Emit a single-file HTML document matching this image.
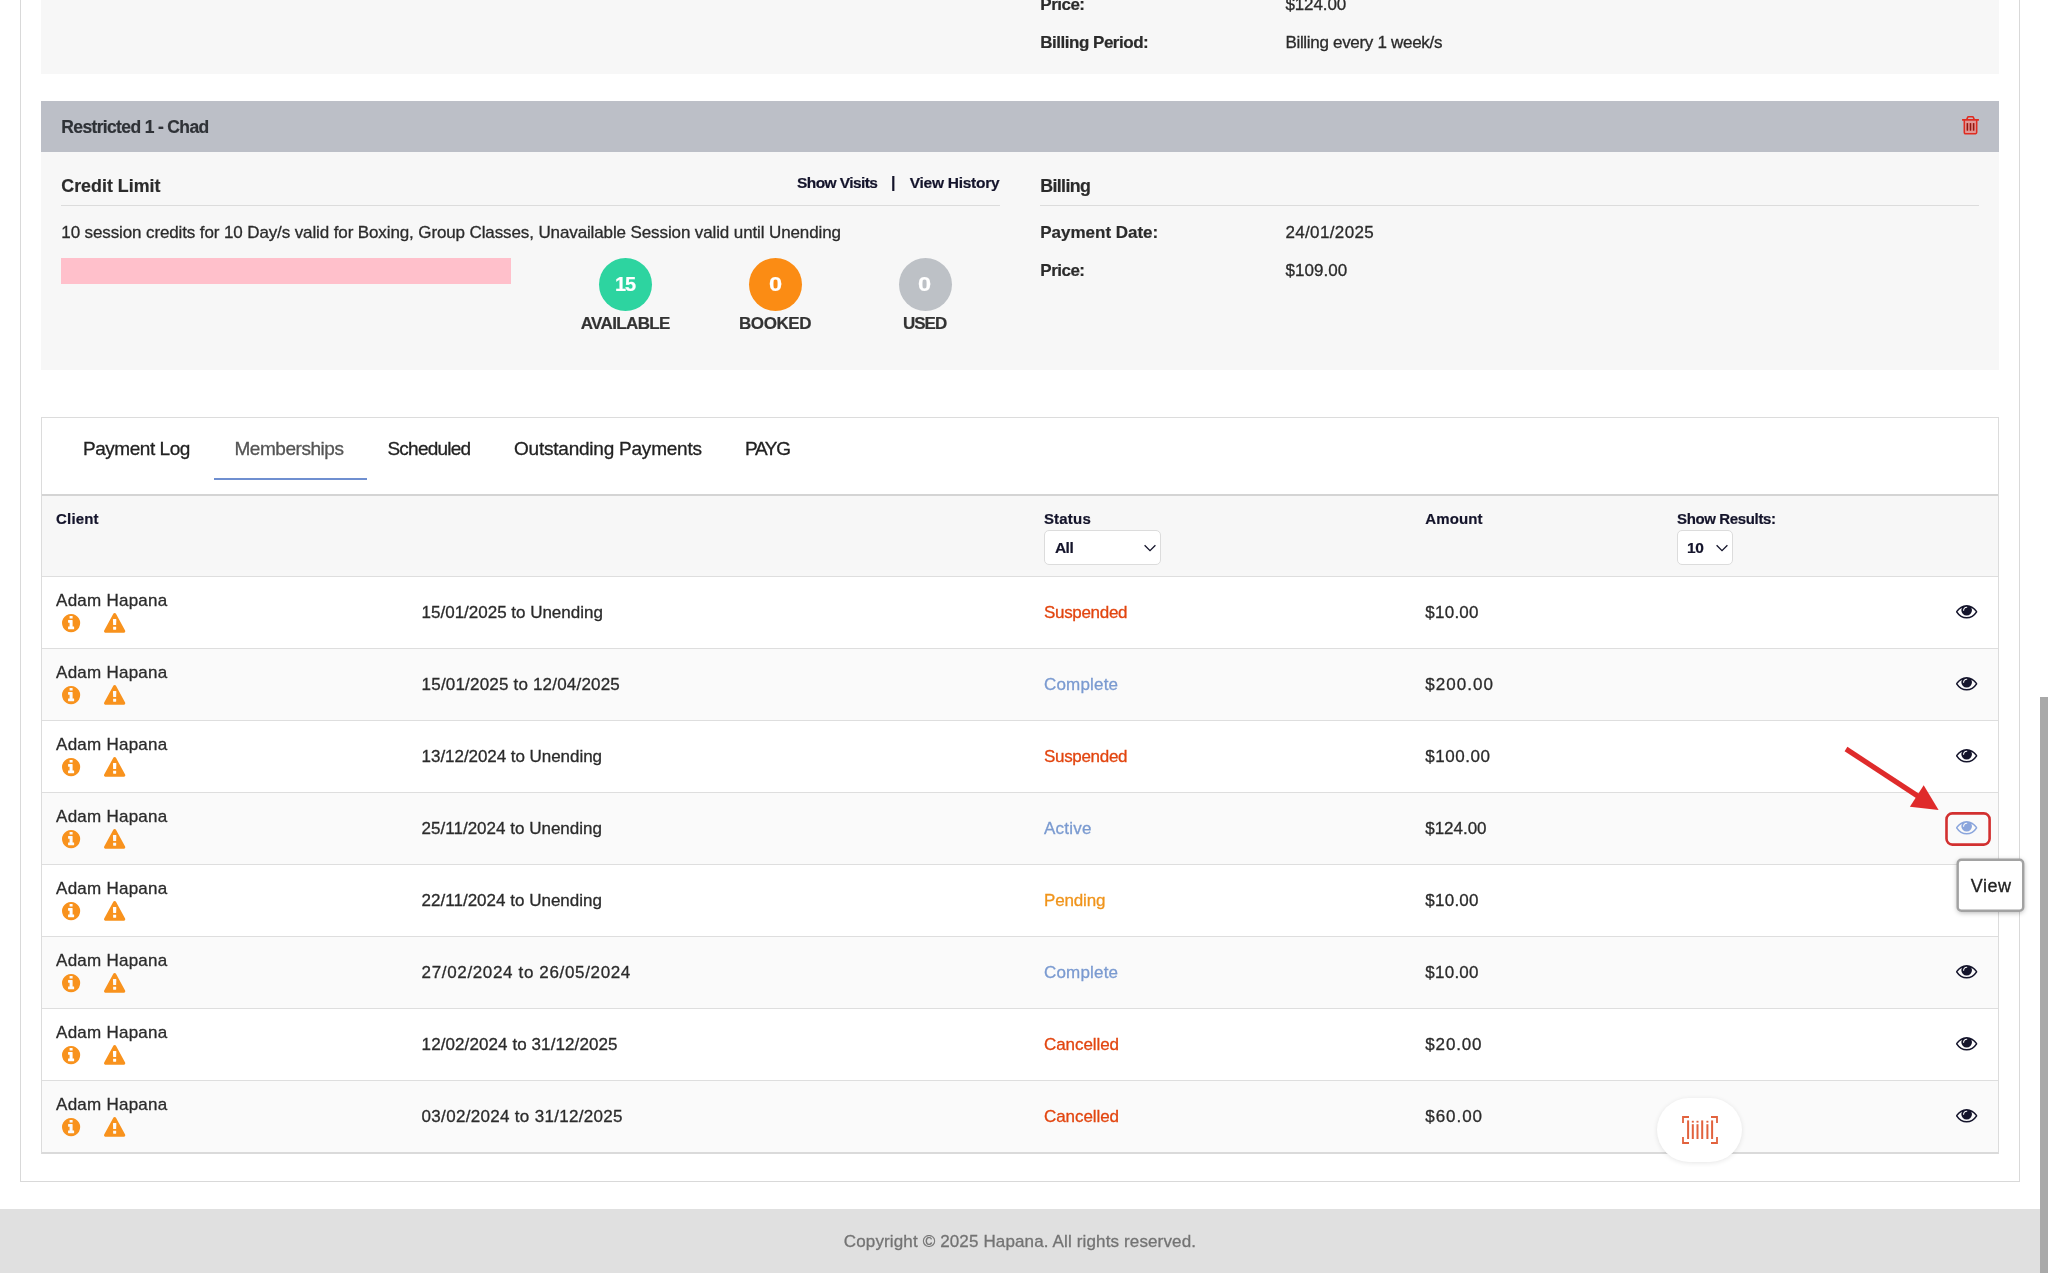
<!DOCTYPE html><html><head><meta charset="utf-8"><title>Memberships</title><style>

html,body{margin:0;padding:0;}
body{width:2048px;height:1273px;position:relative;overflow:hidden;background:#fff;font-family:"Liberation Sans", sans-serif;}
.b{position:absolute;box-sizing:border-box;}
.t{position:absolute;white-space:nowrap;line-height:1;}
.r{-webkit-text-stroke:0.3px currentColor;}
.bd{-webkit-text-stroke:0.2px currentColor;}
.ic{position:absolute;overflow:visible;}

</style></head><body>
<div class="b" style="left:20px;top:0px;width:2000px;height:1182px;border:1px solid #d9d9d9;border-top:none;"></div>
<div class="b" style="left:41px;top:0px;width:1958px;height:74px;background:#f7f7f7;"></div>
<div class="b" style="left:41px;top:101px;width:1958px;height:51px;background:#bcbfc7;"></div>
<div class="b" style="left:41px;top:152px;width:1958px;height:218px;background:#f7f7f7;"></div>
<div class="b" style="left:61px;top:205px;width:939px;height:1px;background:#dcdcdc;"></div>
<div class="b" style="left:1040px;top:205px;width:939px;height:1px;background:#dcdcdc;"></div>
<div class="b" style="left:61px;top:258px;width:450px;height:26px;background:#ffc0cb;"></div>
<div class="b" style="left:599px;top:257.7px;width:53px;height:53px;background:#2dd4a0;border-radius:50%;"></div>
<div class="b" style="left:749px;top:257.7px;width:53px;height:53px;background:#fb8c14;border-radius:50%;"></div>
<div class="b" style="left:898.5px;top:257.7px;width:53px;height:53px;background:#bdc1c6;border-radius:50%;"></div>
<svg class="ic" style="left:1962px;top:116px;width:17px;height:18.6px" viewBox="192 128 1408 1536" preserveAspectRatio="none"><path fill="rgba(255,120,110,0.55)" d="M448 512h896v1020h-896z"/><path fill="#e02b20" d="M704 736v576q0 14-9 23t-23 9h-64q-14 0-23-9t-9-23v-576q0-14 9-23t23-9h64q14 0 23 9t9 23zm256 0v576q0 14-9 23t-23 9h-64q-14 0-23-9t-9-23v-576q0-14 9-23t23-9h64q14 0 23 9t9 23zm256 0v576q0 14-9 23t-23 9h-64q-14 0-23-9t-9-23v-576q0-14 9-23t23-9h64q14 0 23 9t9 23zm128 724v-948h-896v948q0 22 7 40.500t14.500 27 10.500 8.500h832q3 0 10.500-8.500t14.500-27 7-40.500zm-672-1076h448l-48-117q-7-9-17-11h-317q-10 2-17 11zm928 32v64q0 14-9 23t-23 9h-96v948q0 83-47 143.500t-113 60.500h-832q-66 0-113-58.500t-47-141.500v-952h-96q-14 0-23-9t-9-23v-64q0-14 9-23t23-9h309l70-167q15-37 54-63t79-26h320q40 0 79 26t54 63l70 167h309q14 0 23 9t9 23z"/><path fill="#6e1712" fill-opacity="0.75" d="M584 720h112v608h-112zM840 720h112v608h-112zM1096 720h112v608h-112z"/></svg>
<div class="b" style="left:41px;top:417px;width:1958px;height:737px;border:1px solid #dcdcdc;background:#fff;"></div>
<div class="b" style="left:214px;top:478px;width:153px;height:2px;background:#6f8fd0;"></div>
<div class="b" style="left:42px;top:493.5px;width:1956px;height:2.5px;background:#d4d4d4;"></div>
<div class="b" style="left:42px;top:496px;width:1956px;height:80px;background:#f7f7f7;"></div>
<div class="b" style="left:42px;top:576px;width:1956px;height:72px;background:#fff;border-top:1px solid #dedede;"></div>
<div class="b" style="left:42px;top:648px;width:1956px;height:72px;background:#fafafa;border-top:1px solid #dedede;"></div>
<div class="b" style="left:42px;top:720px;width:1956px;height:72px;background:#fff;border-top:1px solid #dedede;"></div>
<div class="b" style="left:42px;top:792px;width:1956px;height:72px;background:#fafafa;border-top:1px solid #dedede;"></div>
<div class="b" style="left:42px;top:864px;width:1956px;height:72px;background:#fff;border-top:1px solid #dedede;"></div>
<div class="b" style="left:42px;top:936px;width:1956px;height:72px;background:#fafafa;border-top:1px solid #dedede;"></div>
<div class="b" style="left:42px;top:1008px;width:1956px;height:72px;background:#fff;border-top:1px solid #dedede;"></div>
<div class="b" style="left:42px;top:1080px;width:1956px;height:72px;background:#fafafa;border-top:1px solid #dedede;"></div>
<div class="b" style="left:42px;top:1151.5px;width:1956px;height:2px;background:#dadada;"></div>
<div class="b" style="left:1044px;top:530px;width:117px;height:35px;background:#fff;border:1px solid #dcdcdc;border-radius:5px;"></div>
<div class="b" style="left:1677px;top:530px;width:56px;height:35px;background:#fff;border:1px solid #dcdcdc;border-radius:5px;"></div>
<svg class="ic" style="left:1142.7px;top:543px;width:14px;height:10px" viewBox="0 0 14 10"><path d="M1.6 2.2 L7 7.6 L12.4 2.2" fill="none" stroke="#14142b" stroke-width="1.3"/></svg>
<svg class="ic" style="left:1715px;top:543px;width:14px;height:10px" viewBox="0 0 14 10"><path d="M1.6 2.2 L7 7.6 L12.4 2.2" fill="none" stroke="#14142b" stroke-width="1.3"/></svg>
<svg class="ic" style="left:62.2px;top:614.4px;width:18.2px;height:18.2px" viewBox="128 128 1536 1536" preserveAspectRatio="none"><path fill="#f8921d" d="M1152 1376v-160q0-14-9-23t-23-9h-96v-512q0-14-9-23t-23-9h-320q-14 0-23 9t-9 23v160q0 14 9 23t23 9h96v320h-96q-14 0-23 9t-9 23v160q0 14 9 23t23 9h448q14 0 23-9t9-23zm-128-896v-160q0-14-9-23t-23-9h-192q-14 0-23 9t-9 23v160q0 14 9 23t23 9h192q14 0 23-9t9-23zm640 416q0 209-103 385.500t-279.500 279.500-385.500 103-385.500-103-279.500-279.500-103-385.500 103-385.500 279.500-279.500 385.500-103 385.500 103 279.500 279.500 103 385.500z"/></svg>
<svg class="ic" style="left:104.2px;top:613.0px;width:21.3px;height:19.7px" viewBox="-1 0 1794 1664" preserveAspectRatio="none"><path fill="#f8921d" d="M1024 1375v-190q0-14-9.500-23.500t-22.500-9.500h-192q-13 0-22.500 9.500t-9.500 23.500v190q0 14 9.500 23.500t22.500 9.500h192q13 0 22.500-9.500t9.500-23.500zm-2-374l18-459q0-12-10-19-13-11-24-11h-220q-11 0-24 11-10 7-10 21l17 457q0 10 10 16.500t24 6.500h185q14 0 23.500-6.500t10.500-16.500zm-14-934l768 1408q35 63-2 126-17 29-46.500 46t-63.500 17h-1536q-34 0-63.500-17t-46.500-46q-37-63-2-126l768-1408q17-31 47-49t65-18 65 18 47 49z"/></svg>
<svg class="ic" style="left:1956.3px;top:605px;width:21.3px;height:13.6px" viewBox="0 384 1792 1152" preserveAspectRatio="none"><path fill="#14142b" d="M1664 960q-152-236-381-353 61 104 61 225 0 185-131.500 316.500t-316.500 131.500-316.500-131.500-131.500-316.500q0-121 61-225-229 117-381 353 133 205 333.500 326.500t434.500 121.500 434.500-121.500 333.500-326.500zm-720-384q0-20-14-34t-34-14q-125 0-214.500 89.500t-89.500 214.500q0 20 14 34t34 14 34-14 14-34q0-86 61-147t147-61q20 0 34-14t14-34zm848 384q0 34-20 69-140 230-376.500 368.500t-499.500 138.500-499.500-139-376.500-368q-20-35-20-69t20-69q140-229 376.500-368t499.500-139 499.500 139 376.500 368q20 35 20 69z"/></svg>
<svg class="ic" style="left:62.2px;top:686.4px;width:18.2px;height:18.2px" viewBox="128 128 1536 1536" preserveAspectRatio="none"><path fill="#f8921d" d="M1152 1376v-160q0-14-9-23t-23-9h-96v-512q0-14-9-23t-23-9h-320q-14 0-23 9t-9 23v160q0 14 9 23t23 9h96v320h-96q-14 0-23 9t-9 23v160q0 14 9 23t23 9h448q14 0 23-9t9-23zm-128-896v-160q0-14-9-23t-23-9h-192q-14 0-23 9t-9 23v160q0 14 9 23t23 9h192q14 0 23-9t9-23zm640 416q0 209-103 385.500t-279.500 279.500-385.500 103-385.500-103-279.500-279.500-103-385.500 103-385.500 279.500-279.500 385.500-103 385.500 103 279.500 279.500 103 385.500z"/></svg>
<svg class="ic" style="left:104.2px;top:685.0px;width:21.3px;height:19.7px" viewBox="-1 0 1794 1664" preserveAspectRatio="none"><path fill="#f8921d" d="M1024 1375v-190q0-14-9.500-23.500t-22.500-9.500h-192q-13 0-22.500 9.500t-9.500 23.500v190q0 14 9.500 23.500t22.500 9.500h192q13 0 22.500-9.500t9.500-23.500zm-2-374l18-459q0-12-10-19-13-11-24-11h-220q-11 0-24 11-10 7-10 21l17 457q0 10 10 16.500t24 6.500h185q14 0 23.500-6.500t10.500-16.500zm-14-934l768 1408q35 63-2 126-17 29-46.500 46t-63.500 17h-1536q-34 0-63.500-17t-46.500-46q-37-63-2-126l768-1408q17-31 47-49t65-18 65 18 47 49z"/></svg>
<svg class="ic" style="left:1956.3px;top:677px;width:21.3px;height:13.6px" viewBox="0 384 1792 1152" preserveAspectRatio="none"><path fill="#14142b" d="M1664 960q-152-236-381-353 61 104 61 225 0 185-131.500 316.500t-316.500 131.500-316.500-131.500-131.500-316.500q0-121 61-225-229 117-381 353 133 205 333.500 326.500t434.500 121.500 434.500-121.500 333.500-326.500zm-720-384q0-20-14-34t-34-14q-125 0-214.500 89.500t-89.500 214.500q0 20 14 34t34 14 34-14 14-34q0-86 61-147t147-61q20 0 34-14t14-34zm848 384q0 34-20 69-140 230-376.500 368.500t-499.500 138.500-499.500-139-376.500-368q-20-35-20-69t20-69q140-229 376.500-368t499.500-139 499.500 139 376.500 368q20 35 20 69z"/></svg>
<svg class="ic" style="left:62.2px;top:758.4px;width:18.2px;height:18.2px" viewBox="128 128 1536 1536" preserveAspectRatio="none"><path fill="#f8921d" d="M1152 1376v-160q0-14-9-23t-23-9h-96v-512q0-14-9-23t-23-9h-320q-14 0-23 9t-9 23v160q0 14 9 23t23 9h96v320h-96q-14 0-23 9t-9 23v160q0 14 9 23t23 9h448q14 0 23-9t9-23zm-128-896v-160q0-14-9-23t-23-9h-192q-14 0-23 9t-9 23v160q0 14 9 23t23 9h192q14 0 23-9t9-23zm640 416q0 209-103 385.500t-279.500 279.500-385.500 103-385.500-103-279.500-279.500-103-385.500 103-385.500 279.500-279.500 385.500-103 385.500 103 279.500 279.500 103 385.500z"/></svg>
<svg class="ic" style="left:104.2px;top:757.0px;width:21.3px;height:19.7px" viewBox="-1 0 1794 1664" preserveAspectRatio="none"><path fill="#f8921d" d="M1024 1375v-190q0-14-9.500-23.500t-22.500-9.500h-192q-13 0-22.500 9.500t-9.500 23.500v190q0 14 9.500 23.500t22.500 9.500h192q13 0 22.500-9.500t9.500-23.500zm-2-374l18-459q0-12-10-19-13-11-24-11h-220q-11 0-24 11-10 7-10 21l17 457q0 10 10 16.500t24 6.500h185q14 0 23.500-6.500t10.500-16.500zm-14-934l768 1408q35 63-2 126-17 29-46.500 46t-63.500 17h-1536q-34 0-63.500-17t-46.500-46q-37-63-2-126l768-1408q17-31 47-49t65-18 65 18 47 49z"/></svg>
<svg class="ic" style="left:1956.3px;top:749px;width:21.3px;height:13.6px" viewBox="0 384 1792 1152" preserveAspectRatio="none"><path fill="#14142b" d="M1664 960q-152-236-381-353 61 104 61 225 0 185-131.500 316.500t-316.500 131.500-316.500-131.500-131.500-316.500q0-121 61-225-229 117-381 353 133 205 333.500 326.500t434.500 121.500 434.500-121.500 333.500-326.500zm-720-384q0-20-14-34t-34-14q-125 0-214.500 89.500t-89.500 214.500q0 20 14 34t34 14 34-14 14-34q0-86 61-147t147-61q20 0 34-14t14-34zm848 384q0 34-20 69-140 230-376.500 368.500t-499.500 138.500-499.500-139-376.500-368q-20-35-20-69t20-69q140-229 376.500-368t499.500-139 499.500 139 376.500 368q20 35 20 69z"/></svg>
<svg class="ic" style="left:62.2px;top:830.4px;width:18.2px;height:18.2px" viewBox="128 128 1536 1536" preserveAspectRatio="none"><path fill="#f8921d" d="M1152 1376v-160q0-14-9-23t-23-9h-96v-512q0-14-9-23t-23-9h-320q-14 0-23 9t-9 23v160q0 14 9 23t23 9h96v320h-96q-14 0-23 9t-9 23v160q0 14 9 23t23 9h448q14 0 23-9t9-23zm-128-896v-160q0-14-9-23t-23-9h-192q-14 0-23 9t-9 23v160q0 14 9 23t23 9h192q14 0 23-9t9-23zm640 416q0 209-103 385.500t-279.500 279.500-385.500 103-385.500-103-279.500-279.500-103-385.500 103-385.500 279.500-279.500 385.500-103 385.500 103 279.500 279.500 103 385.500z"/></svg>
<svg class="ic" style="left:104.2px;top:829.0px;width:21.3px;height:19.7px" viewBox="-1 0 1794 1664" preserveAspectRatio="none"><path fill="#f8921d" d="M1024 1375v-190q0-14-9.500-23.500t-22.500-9.500h-192q-13 0-22.500 9.500t-9.500 23.500v190q0 14 9.500 23.500t22.500 9.500h192q13 0 22.500-9.500t9.500-23.500zm-2-374l18-459q0-12-10-19-13-11-24-11h-220q-11 0-24 11-10 7-10 21l17 457q0 10 10 16.500t24 6.500h185q14 0 23.500-6.500t10.500-16.500zm-14-934l768 1408q35 63-2 126-17 29-46.500 46t-63.500 17h-1536q-34 0-63.500-17t-46.500-46q-37-63-2-126l768-1408q17-31 47-49t65-18 65 18 47 49z"/></svg>
<svg class="ic" style="left:1956.3px;top:821px;width:21.3px;height:13.6px" viewBox="0 384 1792 1152" preserveAspectRatio="none"><path fill="#8aa5dc" d="M1664 960q-152-236-381-353 61 104 61 225 0 185-131.500 316.500t-316.500 131.500-316.500-131.500-131.500-316.500q0-121 61-225-229 117-381 353 133 205 333.500 326.500t434.500 121.500 434.500-121.500 333.500-326.500zm-720-384q0-20-14-34t-34-14q-125 0-214.500 89.500t-89.500 214.500q0 20 14 34t34 14 34-14 14-34q0-86 61-147t147-61q20 0 34-14t14-34zm848 384q0 34-20 69-140 230-376.500 368.500t-499.500 138.500-499.500-139-376.500-368q-20-35-20-69t20-69q140-229 376.500-368t499.500-139 499.500 139 376.500 368q20 35 20 69z"/></svg>
<svg class="ic" style="left:62.2px;top:902.4px;width:18.2px;height:18.2px" viewBox="128 128 1536 1536" preserveAspectRatio="none"><path fill="#f8921d" d="M1152 1376v-160q0-14-9-23t-23-9h-96v-512q0-14-9-23t-23-9h-320q-14 0-23 9t-9 23v160q0 14 9 23t23 9h96v320h-96q-14 0-23 9t-9 23v160q0 14 9 23t23 9h448q14 0 23-9t9-23zm-128-896v-160q0-14-9-23t-23-9h-192q-14 0-23 9t-9 23v160q0 14 9 23t23 9h192q14 0 23-9t9-23zm640 416q0 209-103 385.500t-279.500 279.500-385.500 103-385.500-103-279.500-279.500-103-385.500 103-385.500 279.500-279.500 385.500-103 385.500 103 279.500 279.500 103 385.500z"/></svg>
<svg class="ic" style="left:104.2px;top:901.0px;width:21.3px;height:19.7px" viewBox="-1 0 1794 1664" preserveAspectRatio="none"><path fill="#f8921d" d="M1024 1375v-190q0-14-9.500-23.500t-22.500-9.500h-192q-13 0-22.500 9.500t-9.500 23.500v190q0 14 9.500 23.500t22.500 9.500h192q13 0 22.500-9.500t9.500-23.500zm-2-374l18-459q0-12-10-19-13-11-24-11h-220q-11 0-24 11-10 7-10 21l17 457q0 10 10 16.500t24 6.500h185q14 0 23.500-6.500t10.500-16.500zm-14-934l768 1408q35 63-2 126-17 29-46.500 46t-63.500 17h-1536q-34 0-63.500-17t-46.500-46q-37-63-2-126l768-1408q17-31 47-49t65-18 65 18 47 49z"/></svg>
<svg class="ic" style="left:62.2px;top:974.4px;width:18.2px;height:18.2px" viewBox="128 128 1536 1536" preserveAspectRatio="none"><path fill="#f8921d" d="M1152 1376v-160q0-14-9-23t-23-9h-96v-512q0-14-9-23t-23-9h-320q-14 0-23 9t-9 23v160q0 14 9 23t23 9h96v320h-96q-14 0-23 9t-9 23v160q0 14 9 23t23 9h448q14 0 23-9t9-23zm-128-896v-160q0-14-9-23t-23-9h-192q-14 0-23 9t-9 23v160q0 14 9 23t23 9h192q14 0 23-9t9-23zm640 416q0 209-103 385.500t-279.500 279.500-385.500 103-385.500-103-279.500-279.500-103-385.500 103-385.500 279.500-279.500 385.500-103 385.500 103 279.500 279.500 103 385.500z"/></svg>
<svg class="ic" style="left:104.2px;top:973.0px;width:21.3px;height:19.7px" viewBox="-1 0 1794 1664" preserveAspectRatio="none"><path fill="#f8921d" d="M1024 1375v-190q0-14-9.500-23.500t-22.500-9.500h-192q-13 0-22.500 9.500t-9.500 23.500v190q0 14 9.500 23.500t22.500 9.500h192q13 0 22.500-9.500t9.500-23.500zm-2-374l18-459q0-12-10-19-13-11-24-11h-220q-11 0-24 11-10 7-10 21l17 457q0 10 10 16.500t24 6.500h185q14 0 23.500-6.500t10.500-16.500zm-14-934l768 1408q35 63-2 126-17 29-46.500 46t-63.500 17h-1536q-34 0-63.500-17t-46.500-46q-37-63-2-126l768-1408q17-31 47-49t65-18 65 18 47 49z"/></svg>
<svg class="ic" style="left:1956.3px;top:965px;width:21.3px;height:13.6px" viewBox="0 384 1792 1152" preserveAspectRatio="none"><path fill="#14142b" d="M1664 960q-152-236-381-353 61 104 61 225 0 185-131.500 316.500t-316.500 131.500-316.500-131.500-131.500-316.500q0-121 61-225-229 117-381 353 133 205 333.500 326.500t434.500 121.500 434.500-121.500 333.500-326.500zm-720-384q0-20-14-34t-34-14q-125 0-214.500 89.500t-89.500 214.500q0 20 14 34t34 14 34-14 14-34q0-86 61-147t147-61q20 0 34-14t14-34zm848 384q0 34-20 69-140 230-376.500 368.500t-499.500 138.500-499.500-139-376.500-368q-20-35-20-69t20-69q140-229 376.500-368t499.500-139 499.500 139 376.500 368q20 35 20 69z"/></svg>
<svg class="ic" style="left:62.2px;top:1046.4px;width:18.2px;height:18.2px" viewBox="128 128 1536 1536" preserveAspectRatio="none"><path fill="#f8921d" d="M1152 1376v-160q0-14-9-23t-23-9h-96v-512q0-14-9-23t-23-9h-320q-14 0-23 9t-9 23v160q0 14 9 23t23 9h96v320h-96q-14 0-23 9t-9 23v160q0 14 9 23t23 9h448q14 0 23-9t9-23zm-128-896v-160q0-14-9-23t-23-9h-192q-14 0-23 9t-9 23v160q0 14 9 23t23 9h192q14 0 23-9t9-23zm640 416q0 209-103 385.500t-279.500 279.500-385.500 103-385.500-103-279.500-279.500-103-385.500 103-385.500 279.500-279.500 385.500-103 385.500 103 279.500 279.500 103 385.500z"/></svg>
<svg class="ic" style="left:104.2px;top:1045.0px;width:21.3px;height:19.7px" viewBox="-1 0 1794 1664" preserveAspectRatio="none"><path fill="#f8921d" d="M1024 1375v-190q0-14-9.500-23.500t-22.500-9.500h-192q-13 0-22.500 9.500t-9.500 23.500v190q0 14 9.500 23.500t22.500 9.500h192q13 0 22.500-9.500t9.500-23.500zm-2-374l18-459q0-12-10-19-13-11-24-11h-220q-11 0-24 11-10 7-10 21l17 457q0 10 10 16.500t24 6.500h185q14 0 23.500-6.500t10.500-16.500zm-14-934l768 1408q35 63-2 126-17 29-46.500 46t-63.500 17h-1536q-34 0-63.500-17t-46.500-46q-37-63-2-126l768-1408q17-31 47-49t65-18 65 18 47 49z"/></svg>
<svg class="ic" style="left:1956.3px;top:1037px;width:21.3px;height:13.6px" viewBox="0 384 1792 1152" preserveAspectRatio="none"><path fill="#14142b" d="M1664 960q-152-236-381-353 61 104 61 225 0 185-131.500 316.500t-316.500 131.500-316.500-131.500-131.500-316.500q0-121 61-225-229 117-381 353 133 205 333.500 326.500t434.500 121.500 434.500-121.500 333.500-326.500zm-720-384q0-20-14-34t-34-14q-125 0-214.500 89.500t-89.500 214.500q0 20 14 34t34 14 34-14 14-34q0-86 61-147t147-61q20 0 34-14t14-34zm848 384q0 34-20 69-140 230-376.500 368.500t-499.500 138.500-499.500-139-376.500-368q-20-35-20-69t20-69q140-229 376.500-368t499.500-139 499.500 139 376.500 368q20 35 20 69z"/></svg>
<svg class="ic" style="left:62.2px;top:1118.4px;width:18.2px;height:18.2px" viewBox="128 128 1536 1536" preserveAspectRatio="none"><path fill="#f8921d" d="M1152 1376v-160q0-14-9-23t-23-9h-96v-512q0-14-9-23t-23-9h-320q-14 0-23 9t-9 23v160q0 14 9 23t23 9h96v320h-96q-14 0-23 9t-9 23v160q0 14 9 23t23 9h448q14 0 23-9t9-23zm-128-896v-160q0-14-9-23t-23-9h-192q-14 0-23 9t-9 23v160q0 14 9 23t23 9h192q14 0 23-9t9-23zm640 416q0 209-103 385.500t-279.500 279.500-385.500 103-385.500-103-279.500-279.500-103-385.500 103-385.500 279.500-279.500 385.500-103 385.500 103 279.500 279.500 103 385.500z"/></svg>
<svg class="ic" style="left:104.2px;top:1117.0px;width:21.3px;height:19.7px" viewBox="-1 0 1794 1664" preserveAspectRatio="none"><path fill="#f8921d" d="M1024 1375v-190q0-14-9.500-23.500t-22.500-9.500h-192q-13 0-22.500 9.500t-9.500 23.500v190q0 14 9.500 23.500t22.500 9.500h192q13 0 22.500-9.500t9.500-23.500zm-2-374l18-459q0-12-10-19-13-11-24-11h-220q-11 0-24 11-10 7-10 21l17 457q0 10 10 16.500t24 6.500h185q14 0 23.500-6.500t10.500-16.500zm-14-934l768 1408q35 63-2 126-17 29-46.500 46t-63.500 17h-1536q-34 0-63.500-17t-46.500-46q-37-63-2-126l768-1408q17-31 47-49t65-18 65 18 47 49z"/></svg>
<svg class="ic" style="left:1956.3px;top:1109px;width:21.3px;height:13.6px" viewBox="0 384 1792 1152" preserveAspectRatio="none"><path fill="#14142b" d="M1664 960q-152-236-381-353 61 104 61 225 0 185-131.500 316.500t-316.500 131.500-316.500-131.500-131.500-316.500q0-121 61-225-229 117-381 353 133 205 333.500 326.500t434.500 121.500 434.500-121.500 333.500-326.500zm-720-384q0-20-14-34t-34-14q-125 0-214.500 89.500t-89.500 214.500q0 20 14 34t34 14 34-14 14-34q0-86 61-147t147-61q20 0 34-14t14-34zm848 384q0 34-20 69-140 230-376.500 368.500t-499.500 138.500-499.500-139-376.500-368q-20-35-20-69t20-69q140-229 376.500-368t499.500-139 499.500 139 376.500 368q20 35 20 69z"/></svg>
<svg class="ic" style="left:1940px;top:806px;width:60px;height:46px" viewBox="1940 806 60 46"><rect x="1946.5" y="813.4" width="43.1" height="31.2" rx="5.8" ry="5.8" fill="none" stroke="#d23030" stroke-width="2.6"/></svg>
<svg class="ic" style="left:1830px;top:740px;width:120px;height:80px" viewBox="1830 740 120 80"><path d="M1846 749 L1920 797.5" stroke="#df2b2b" stroke-width="5.2" fill="none"/><path d="M1938.6 810.1 L1909.9 806.7 L1923.7 785.3 Z" fill="#df2b2b"/></svg>
<div class="b" style="left:1957px;top:859px;width:67px;height:52.5px;background:#fff;border-radius:5px;box-shadow:0 1px 5px rgba(0,0,0,0.28);"></div>
<svg class="ic" style="left:1950px;top:852px;width:80px;height:66px" viewBox="1950 852 80 66"><rect x="1957.7" y="859.8" width="65.5" height="51" rx="3.6" ry="3.6" fill="#fff" stroke="#a2a2a2" stroke-width="2.4"/></svg>
<div class="b" style="left:1657.3px;top:1097.8px;width:85px;height:64.2px;background:#fff;border-radius:32px;box-shadow:0 1px 5px rgba(0,0,0,0.10);"></div>
<svg class="ic" style="left:1681.8px;top:1115.6px;width:36px;height:28px" viewBox="0 0 36 28"><path d="M1 7 V1 H7 M29 1 H35 V7 M35 21 V27 H29 M7 27 H1 V21" fill="none" stroke="#e2623d" stroke-width="1.8"/><rect x="5.1" y="4.4" width="2" height="18.6" fill="#e2623d"/><rect x="9.8" y="4.8" width="2" height="1.8" fill="#e2623d"/><rect x="9.8" y="8.2" width="2" height="14.8" fill="#e2623d"/><rect x="14.5" y="4.8" width="2" height="1.8" fill="#e2623d"/><rect x="14.5" y="8.2" width="2" height="14.8" fill="#e2623d"/><rect x="19.2" y="4.4" width="2" height="18.6" fill="#e2623d"/><rect x="24.4" y="4.8" width="2" height="1.8" fill="#e2623d"/><rect x="24.4" y="8.2" width="2" height="14.8" fill="#e2623d"/><rect x="29.1" y="4.4" width="2" height="18.6" fill="#e2623d"/></svg>
<div class="b" style="left:0px;top:1209px;width:2040px;height:64px;background:#e0e0e0;"></div>
<div class="b" style="left:2040px;top:697px;width:8px;height:576px;background:#a9a9a9;"></div>
<div id="txt" style="position:absolute;left:0;top:0;width:2048px;height:1273px;will-change:transform">
<span class="t bd" id="t0" style="left:1040.3px;top:-4.09px;font-size:17px;font-weight:700;color:#2b2b2b;letter-spacing:-0.510px">Price:</span>
<span class="t r" id="t1" style="left:1285.4px;top:-4.09px;font-size:17px;font-weight:400;color:#2b2b2b;letter-spacing:-0.109px">$124.00</span>
<span class="t bd" id="t2" style="left:1040.3px;top:33.71px;font-size:17px;font-weight:700;color:#2b2b2b;letter-spacing:-0.488px">Billing Period:</span>
<span class="t r" id="t3" style="left:1285.4px;top:33.71px;font-size:17px;font-weight:400;color:#2b2b2b;letter-spacing:-0.308px">Billing every 1 week/s</span>
<span class="t bd" id="t4" style="left:61.3px;top:118.99px;font-size:17.5px;font-weight:700;color:#2f3237;letter-spacing:-0.644px">Restricted 1 - Chad</span>
<span class="t bd" id="t5" style="left:61.3px;top:177.73px;font-size:17.8px;font-weight:700;color:#2b2b2b;letter-spacing:0.028px">Credit Limit</span>
<span class="t bd" id="t6" style="left:797.1px;top:174.98px;font-size:15.5px;font-weight:700;color:#14142b;letter-spacing:-0.582px">Show Visits</span>
<span class="t bd" id="t7" style="left:891.1px;top:174.86px;font-size:16px;font-weight:700;color:#14142b;letter-spacing:0.000px">|</span>
<span class="t bd" id="t8" style="left:909.8px;top:174.98px;font-size:15.5px;font-weight:700;color:#14142b;letter-spacing:-0.270px">View History</span>
<span class="t r" id="t9" style="left:61.3px;top:223.81px;font-size:17px;font-weight:400;color:#2b2b2b;letter-spacing:-0.117px">10 session credits for 10 Day/s valid for Boxing, Group Classes, Unavailable Session valid until Unending</span>
<span class="t bd" id="t10" style="left:614.9px;top:273.97px;font-size:20px;font-weight:700;color:#fff;letter-spacing:-1.050px">15</span>
<span class="t bd" id="t11" style="left:768.9px;top:273.97px;font-size:20px;font-weight:700;color:#fff;letter-spacing:0.000px;transform:scaleX(1.18);transform-origin:0 0">0</span>
<span class="t bd" id="t12" style="left:918.4px;top:273.97px;font-size:20px;font-weight:700;color:#fff;letter-spacing:0.000px;transform:scaleX(1.18);transform-origin:0 0">0</span>
<span class="t bd" id="t13" style="left:580.7px;top:315.01px;font-size:17px;font-weight:700;color:#333;letter-spacing:-0.633px">AVAILABLE</span>
<span class="t bd" id="t14" style="left:739px;top:315.01px;font-size:17px;font-weight:700;color:#333;letter-spacing:-0.425px">BOOKED</span>
<span class="t bd" id="t15" style="left:902.9px;top:315.01px;font-size:17px;font-weight:700;color:#333;letter-spacing:-0.978px">USED</span>
<span class="t bd" id="t16" style="left:1040.3px;top:177.73px;font-size:17.8px;font-weight:700;color:#2b2b2b;letter-spacing:-0.638px">Billing</span>
<span class="t bd" id="t17" style="left:1040.3px;top:223.71px;font-size:17px;font-weight:700;color:#2b2b2b;letter-spacing:-0.017px">Payment Date:</span>
<span class="t r" id="t18" style="left:1285.4px;top:223.71px;font-size:17px;font-weight:400;color:#2b2b2b;letter-spacing:0.367px">24/01/2025</span>
<span class="t bd" id="t19" style="left:1040.3px;top:261.81px;font-size:17px;font-weight:700;color:#2b2b2b;letter-spacing:-0.510px">Price:</span>
<span class="t r" id="t20" style="left:1285.4px;top:261.81px;font-size:17px;font-weight:400;color:#2b2b2b;letter-spacing:0.058px">$109.00</span>
<span class="t r" id="t21" style="left:83px;top:438.92px;font-size:19px;font-weight:400;color:#222;letter-spacing:-0.457px">Payment Log</span>
<span class="t r" id="t22" style="left:234.4px;top:438.92px;font-size:19px;font-weight:400;color:#555;letter-spacing:-0.445px">Memberships</span>
<span class="t r" id="t23" style="left:387.4px;top:438.92px;font-size:19px;font-weight:400;color:#222;letter-spacing:-0.750px">Scheduled</span>
<span class="t r" id="t24" style="left:514px;top:438.92px;font-size:19px;font-weight:400;color:#222;letter-spacing:-0.222px">Outstanding Payments</span>
<span class="t r" id="t25" style="left:745px;top:438.92px;font-size:19px;font-weight:400;color:#222;letter-spacing:-1.328px">PAYG</span>
<span class="t bd" id="t26" style="left:56.1px;top:510.90px;font-size:15px;font-weight:700;color:#14142b;letter-spacing:0.166px">Client</span>
<span class="t bd" id="t27" style="left:1043.9px;top:510.90px;font-size:15px;font-weight:700;color:#14142b;letter-spacing:0.211px">Status</span>
<span class="t bd" id="t28" style="left:1425.3px;top:510.90px;font-size:15px;font-weight:700;color:#14142b;letter-spacing:0.129px">Amount</span>
<span class="t bd" id="t29" style="left:1677px;top:510.90px;font-size:15px;font-weight:700;color:#14142b;letter-spacing:-0.363px">Show Results:</span>
<span class="t bd" id="t30" style="left:1054.9px;top:540.18px;font-size:15.5px;font-weight:700;color:#14142b;letter-spacing:-0.506px">All</span>
<span class="t bd" id="t31" style="left:1687.0px;top:540.18px;font-size:15.5px;font-weight:700;color:#14142b;letter-spacing:-0.250px">10</span>
<span class="t r" id="t32" style="left:56.1px;top:591.91px;font-size:17px;font-weight:400;color:#2b2b2b;letter-spacing:0.241px">Adam Hapana</span>
<span class="t r" id="t33" style="left:421.6px;top:604.01px;font-size:17px;font-weight:400;color:#2b2b2b;letter-spacing:-0.010px">15/01/2025 to Unending</span>
<span class="t r" id="t34" style="left:1044px;top:604.01px;font-size:17px;font-weight:400;color:#e2450f;letter-spacing:-0.316px">Suspended</span>
<span class="t r" id="t35" style="left:1425.3px;top:604.01px;font-size:17px;font-weight:400;color:#2b2b2b;letter-spacing:0.240px">$10.00</span>
<span class="t r" id="t36" style="left:56.1px;top:663.91px;font-size:17px;font-weight:400;color:#2b2b2b;letter-spacing:0.241px">Adam Hapana</span>
<span class="t r" id="t37" style="left:421.6px;top:676.01px;font-size:17px;font-weight:400;color:#2b2b2b;letter-spacing:0.191px">15/01/2025 to 12/04/2025</span>
<span class="t r" id="t38" style="left:1044px;top:676.01px;font-size:17px;font-weight:400;color:#7a9ad0;letter-spacing:0.176px">Complete</span>
<span class="t r" id="t39" style="left:1425.3px;top:676.01px;font-size:17px;font-weight:400;color:#2b2b2b;letter-spacing:1.041px">$200.00</span>
<span class="t r" id="t40" style="left:56.1px;top:735.91px;font-size:17px;font-weight:400;color:#2b2b2b;letter-spacing:0.241px">Adam Hapana</span>
<span class="t r" id="t41" style="left:421.6px;top:748.01px;font-size:17px;font-weight:400;color:#2b2b2b;letter-spacing:-0.052px">13/12/2024 to Unending</span>
<span class="t r" id="t42" style="left:1044px;top:748.01px;font-size:17px;font-weight:400;color:#e2450f;letter-spacing:-0.316px">Suspended</span>
<span class="t r" id="t43" style="left:1425.3px;top:748.01px;font-size:17px;font-weight:400;color:#2b2b2b;letter-spacing:0.541px">$100.00</span>
<span class="t r" id="t44" style="left:56.1px;top:807.91px;font-size:17px;font-weight:400;color:#2b2b2b;letter-spacing:0.241px">Adam Hapana</span>
<span class="t r" id="t45" style="left:421.6px;top:820.01px;font-size:17px;font-weight:400;color:#2b2b2b;letter-spacing:0.008px">25/11/2024 to Unending</span>
<span class="t r" id="t46" style="left:1044px;top:820.01px;font-size:17px;font-weight:400;color:#7a9ad0;letter-spacing:0.241px">Active</span>
<span class="t r" id="t47" style="left:1425.3px;top:820.01px;font-size:17px;font-weight:400;color:#2b2b2b;letter-spacing:-0.042px">$124.00</span>
<span class="t r" id="t48" style="left:56.1px;top:879.91px;font-size:17px;font-weight:400;color:#2b2b2b;letter-spacing:0.241px">Adam Hapana</span>
<span class="t r" id="t49" style="left:421.6px;top:892.01px;font-size:17px;font-weight:400;color:#2b2b2b;letter-spacing:0.008px">22/11/2024 to Unending</span>
<span class="t r" id="t50" style="left:1044px;top:892.01px;font-size:17px;font-weight:400;color:#f0941b;letter-spacing:-0.148px">Pending</span>
<span class="t r" id="t51" style="left:1425.3px;top:892.01px;font-size:17px;font-weight:400;color:#2b2b2b;letter-spacing:0.240px">$10.00</span>
<span class="t r" id="t52" style="left:56.1px;top:951.91px;font-size:17px;font-weight:400;color:#2b2b2b;letter-spacing:0.241px">Adam Hapana</span>
<span class="t r" id="t53" style="left:421.6px;top:964.01px;font-size:17px;font-weight:400;color:#2b2b2b;letter-spacing:0.648px">27/02/2024 to 26/05/2024</span>
<span class="t r" id="t54" style="left:1044px;top:964.01px;font-size:17px;font-weight:400;color:#7a9ad0;letter-spacing:0.176px">Complete</span>
<span class="t r" id="t55" style="left:1425.3px;top:964.01px;font-size:17px;font-weight:400;color:#2b2b2b;letter-spacing:0.240px">$10.00</span>
<span class="t r" id="t56" style="left:56.1px;top:1023.91px;font-size:17px;font-weight:400;color:#2b2b2b;letter-spacing:0.241px">Adam Hapana</span>
<span class="t r" id="t57" style="left:421.6px;top:1036.01px;font-size:17px;font-weight:400;color:#2b2b2b;letter-spacing:0.091px">12/02/2024 to 31/12/2025</span>
<span class="t r" id="t58" style="left:1044px;top:1036.01px;font-size:17px;font-weight:400;color:#e2450f;letter-spacing:-0.076px">Cancelled</span>
<span class="t r" id="t59" style="left:1425.3px;top:1036.01px;font-size:17px;font-weight:400;color:#2b2b2b;letter-spacing:0.840px">$20.00</span>
<span class="t r" id="t60" style="left:56.1px;top:1095.91px;font-size:17px;font-weight:400;color:#2b2b2b;letter-spacing:0.241px">Adam Hapana</span>
<span class="t r" id="t61" style="left:421.6px;top:1108.01px;font-size:17px;font-weight:400;color:#2b2b2b;letter-spacing:0.309px">03/02/2024 to 31/12/2025</span>
<span class="t r" id="t62" style="left:1044px;top:1108.01px;font-size:17px;font-weight:400;color:#e2450f;letter-spacing:-0.076px">Cancelled</span>
<span class="t r" id="t63" style="left:1425.3px;top:1108.01px;font-size:17px;font-weight:400;color:#2b2b2b;letter-spacing:0.940px">$60.00</span>
<span class="t r" id="t64" style="left:1970.8px;top:876.56px;font-size:18px;font-weight:400;color:#222;letter-spacing:0.466px">View</span>
<span class="t r" id="t65" style="left:843.8px;top:1232.61px;font-size:17px;font-weight:400;color:#737373;letter-spacing:0.138px">Copyright © 2025 Hapana. All rights reserved.</span>
</div>
</body></html>
